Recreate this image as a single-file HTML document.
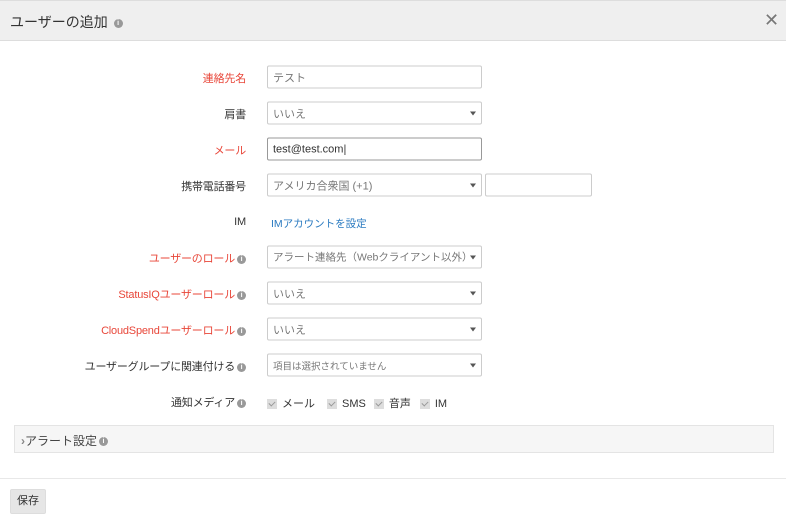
<!DOCTYPE html>
<html><head><meta charset="utf-8"><style>
*{box-sizing:border-box;margin:0;padding:0}
body{width:786px;height:521px;background:#fff;font-family:"Liberation Sans","Noto Sans CJK JP",sans-serif;position:relative;overflow:hidden;color:#333;font-size:12px}
.hdr{position:absolute;left:0;top:0;width:786px;height:41px;background:#efefef;border-bottom:1px solid #ddd;border-top:1px solid #ddd}
.t{position:absolute;left:10px;top:11px;font-size:14px;color:#333}
.i{display:inline-block;width:9px;height:9px;border-radius:50%;background:#999;color:#fff;font-size:7px;line-height:9px;text-align:center;vertical-align:middle;font-weight:bold;margin-left:2px}
.lbl{position:absolute;right:540px;font-size:11px;color:#333;white-space:nowrap;transform:translateY(-50%);letter-spacing:-0.2px}
.red{color:#e8473a}
.in{position:absolute;left:267px;width:215px;height:23px;border:1px solid #ccc;border-radius:2px;font-size:11px;color:#777;padding:0 5px;display:flex;align-items:center;white-space:nowrap;transform:translateY(-50%)}
.in .a{position:absolute;right:5px;top:9px;border-left:3px solid transparent;border-right:3px solid transparent;border-top:4px solid #555}
.cb{display:inline-block;width:10px;height:10px;background:#ddd;vertical-align:middle;margin-right:5px;position:relative}
.cb:after{content:"";position:absolute;left:3px;top:1px;width:3px;height:5px;border:solid #999;border-width:0 1px 1px 0;transform:rotate(45deg)}
</style></head><body>
<div class="hdr"><div class="t">ユーザーの追加 <span class="i">i</span></div>
<div style="position:absolute;left:764px;top:9px;font-size:18px;color:#777">✕</div></div>

<div class="lbl red" style="top:78px">連絡先名</div>
<div class="in" style="top:77px">テスト</div>
<div class="lbl" style="top:114px">肩書</div>
<div class="in" style="top:113px">いいえ<span class="a"></span></div>
<div class="lbl red" style="top:150px">メール</div>
<div class="in" style="top:149px;border-color:#999;color:#333">test@test.com|</div>
<div class="lbl" style="top:186px">携帯電話番号</div>
<div class="in" style="top:185px">アメリカ合衆国 (+1)<span class="a"></span></div>
<div class="in" style="top:185px;left:485px;width:107px"></div>
<div class="lbl" style="top:222px">IM</div>
<div style="position:absolute;left:271px;top:216px;font-size:10.5px;color:#2a7ac0">IMアカウントを設定</div>
<div class="lbl red" style="top:258px">ユーザーのロール<span class="i">i</span></div>
<div class="in" style="top:257px;font-size:10.5px">アラート連絡先（Webクライアント以外）<span class="a"></span></div>
<div class="lbl red" style="top:294px">StatusIQユーザーロール<span class="i">i</span></div>
<div class="in" style="top:293px">いいえ<span class="a"></span></div>
<div class="lbl red" style="top:330px">CloudSpendユーザーロール<span class="i">i</span></div>
<div class="in" style="top:329px">いいえ<span class="a"></span></div>
<div class="lbl" style="top:366px">ユーザーグループに関連付ける<span class="i">i</span></div>
<div class="in" style="top:365px;font-size:9.5px">項目は選択されていません<span class="a"></span></div>
<div class="lbl" style="top:402px">通知メディア<span class="i">i</span></div>
<div style="position:absolute;left:267px;top:395px;font-size:11px;white-space:nowrap"><span class="cb"></span>メール<span style="margin-left:12px" class="cb"></span>SMS<span style="margin-left:8px" class="cb"></span>音声<span style="margin-left:9px" class="cb"></span>IM</div>

<div style="position:absolute;left:14px;top:425px;width:760px;height:28px;background:#f6f6f6;border:1px solid #e4e4e4;padding:6px 0 0 6px;font-size:12px;color:#444"><span style="color:#888;font-weight:bold">›</span>アラート設定<span class="i">i</span></div>
<div style="position:absolute;left:0;top:478px;width:786px;height:1px;background:#e8e8e8"></div>
<div style="position:absolute;left:10px;top:489px;width:36px;height:25px;background:#e6e6e6;border:1px solid #ddd;border-radius:2px;font-size:11px;text-align:center;line-height:23px">保存</div>
</body></html>
